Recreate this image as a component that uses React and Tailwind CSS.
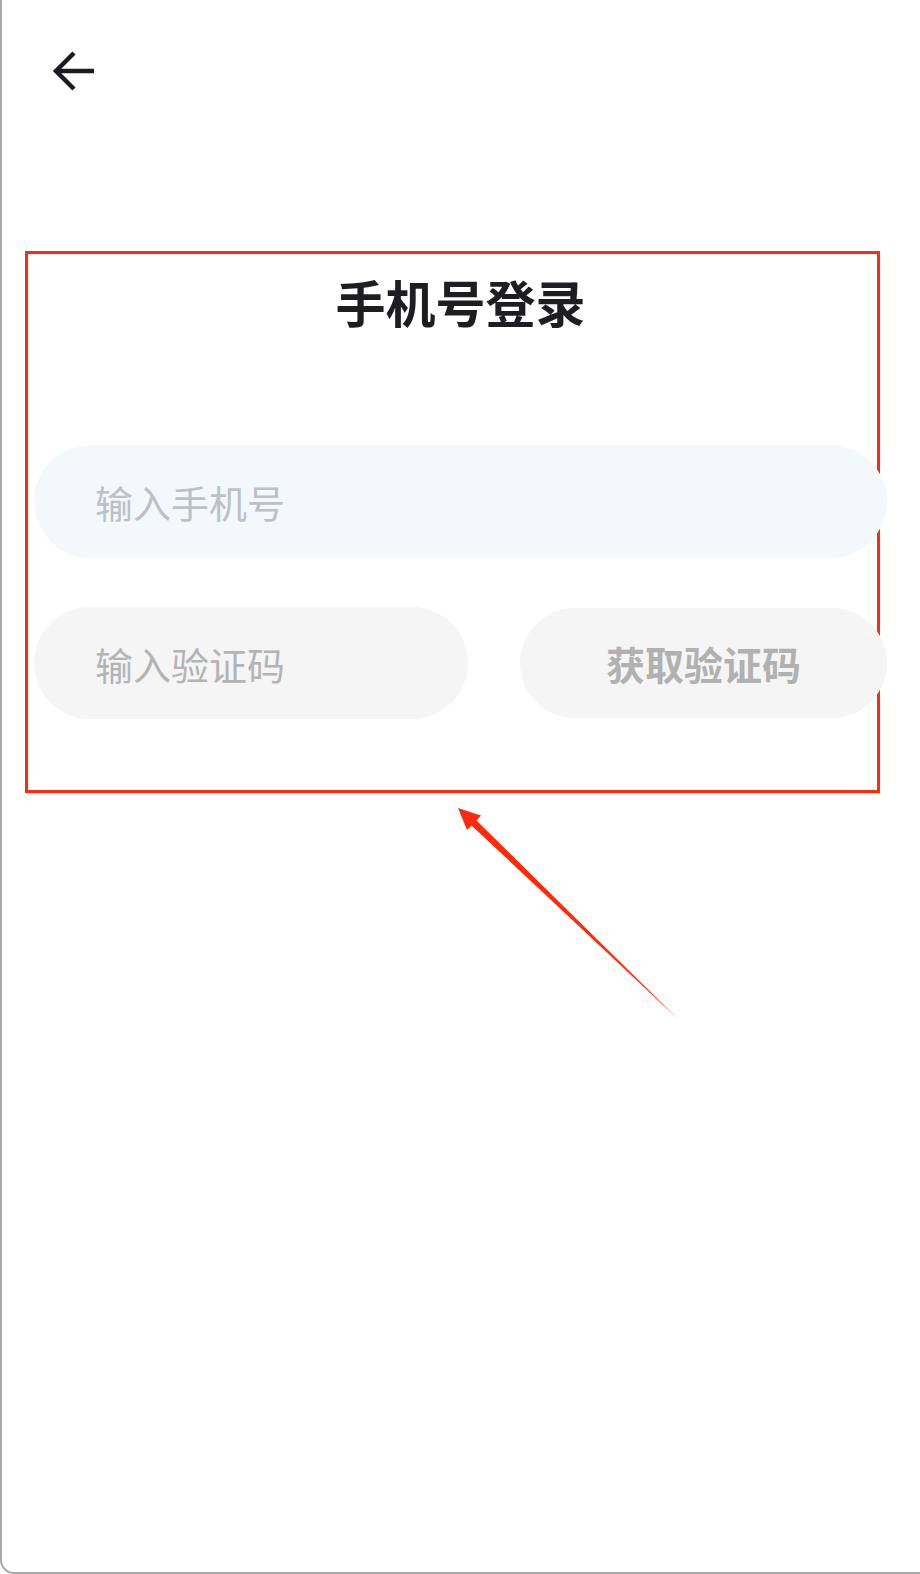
import { useState } from 'react';

const BackArrow = () => (
  <svg width="42" height="42" viewBox="0 0 42 42" fill="none" stroke="#1c1c20" strokeWidth="4.5" strokeLinecap="butt" strokeLinejoin="miter">
    <path d="M42 21H4" />
    <path d="M22 3 4 21l18 18" />
  </svg>
);

// red annotation arrow, tapered from tail to tip
const Annotation = () => (
  <svg className="absolute left-0 top-0 pointer-events-none" width="920" height="1574" viewBox="0 0 920 1574">
    <polygon
      points="456,808 479,815.5 474.5,820.5 677,1020 469.5,825.5 465,830"
      fill="#ff2a0c"
    />
  </svg>
);

const App = () => {
  const [phone, setPhone] = useState('');
  const [code, setCode] = useState('');

  return (
    <div
      className="relative w-[920px] h-[1574px] bg-white border-l-2 border-b-2 border-[#a9a9a9] rounded-bl-[14px] overflow-hidden"
      style={{ fontFamily: '"Noto Sans CJK SC", "Noto Sans", sans-serif' }}
    >
      <div className="pt-[50px] pl-[50px]">
        <button className="block w-[42px] h-[42px]">
          <BackArrow />
        </button>
      </div>

      <div className="ml-[23px] w-[855px] mt-[159px] border-[3px] border-[#ff2a0c] h-[542px]">
        <h1 className="mt-[19px] pl-[16px] text-center text-[50px] leading-[56px] font-bold text-[#1e1e22]">手机号登录</h1>
      </div>

      <div className="absolute left-[32px] top-[445px] w-[853px] flex flex-col gap-[49px]">
        <input
          type="text"
          value={phone}
          onChange={(e) => setPhone(e.target.value)}
          placeholder="输入手机号"
          className="h-[113px] rounded-full bg-[#f3f8fb] pl-[61px] text-[38px] text-[#333] placeholder:text-[#bcc0c7] outline-none"
        />
        <div className="flex items-center justify-between">
          <input
            type="text"
            value={code}
            onChange={(e) => setCode(e.target.value)}
            placeholder="输入验证码"
            className="w-[434px] h-[112px] rounded-full bg-[#f5f5f5] pl-[61px] text-[38px] text-[#333] placeholder:text-[#b4b4b4] outline-none"
          />
          <button className="w-[367px] h-[110px] rounded-full bg-[#f5f5f5] text-[39px] font-bold text-[#b1b1b1]">
            获取验证码
          </button>
        </div>
      </div>

      <Annotation />
    </div>
  );
};

export default App;
